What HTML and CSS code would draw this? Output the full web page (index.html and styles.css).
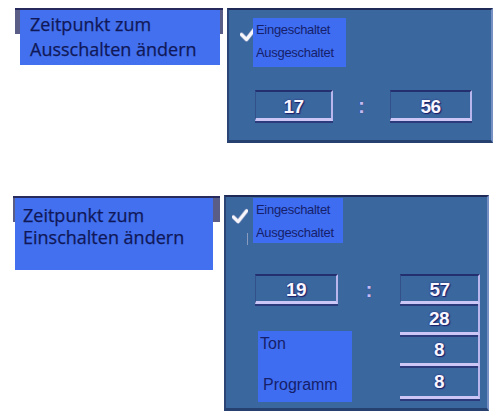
FILE: index.html
```html
<!DOCTYPE html>
<html lang="de">
<head>
<meta charset="utf-8">
<title>Zeitpunkt ändern</title>
<link rel="stylesheet" href="styles.css">
</head>
<body>
<div class="page">
  <section class="row row1">
    <div class="label label1">
      <div class="label-box label-box1">Zeitpunkt zum<br>Ausschalten ändern</div>
    </div>
    <div class="panel panel1">
      <div class="opts opts1">
        <div class="check-col check-col1">
          <svg class="check" viewBox="0 0 17 17" width="17" height="17"><path d="M1.5 9.5 L6.5 14.5 L15.5 3" fill="none" stroke="#9aa6c8" stroke-width="4.4" stroke-linecap="round" stroke-linejoin="round"/><path d="M1.5 9.5 L6.5 14.5 L15.5 3" fill="none" stroke="#f6f6fb" stroke-width="3" stroke-linecap="round" stroke-linejoin="round"/></svg>
        </div>
        <div class="opt-box opt-box1"><div>Eingeschaltet</div><div>Ausgeschaltet</div></div>
      </div>
      <div class="time time1">
        <div class="field tfield f17">17</div>
        <span class="colon colon1">:</span>
        <div class="field tfield f56">56</div>
      </div>
    </div>
  </section>

  <section class="row row2">
    <div class="label label2">
      <div class="label-box label-box2">Zeitpunkt zum<br>Einschalten ändern</div>
    </div>
    <div class="panel panel2">
      <div class="opts opts2">
        <div class="check-col check-col2">
          <svg class="check" viewBox="0 0 17 17" width="16" height="16"><path d="M1.5 9.5 L6.5 14.5 L15.5 3" fill="none" stroke="#9aa6c8" stroke-width="4.4" stroke-linecap="round" stroke-linejoin="round"/><path d="M1.5 9.5 L6.5 14.5 L15.5 3" fill="none" stroke="#f6f6fb" stroke-width="3" stroke-linecap="round" stroke-linejoin="round"/></svg>
          <div class="tick-line"></div>
        </div>
        <div class="opt-box opt-box2"><div>Eingeschaltet</div><div>Ausgeschaltet</div></div>
      </div>
      <div class="time time2">
        <div class="field tfield f19">19</div>
        <span class="colon colon2">:</span>
        <div class="field tfield f57">57</div>
      </div>
      <div class="lower">
        <div class="tp-box">
          <div class="ton">Ton</div>
          <div class="prog">Programm</div>
        </div>
        <div class="stack">
          <div class="field sfield">28</div>
          <div class="field sfield">8</div>
          <div class="field sfield last">8</div>
        </div>
      </div>
    </div>
  </section>
</div>
</body>
</html>
```
FILE: styles.css
```css
html, body {
  margin: 0;
  padding: 0;
  background: #ffffff;
}
body {
  width: 498px;
  height: 420px;
  overflow: hidden;
  font-family: "Liberation Sans", Arial, sans-serif;
}

.row {
  display: flex;
  align-items: flex-start;
}
.row1 {
  padding: 8px 0 0 15px;
}
.row2 {
  margin-top: 52px;
  padding-left: 13px;
}

/* left labels */
.label {
  box-sizing: border-box;
  background: linear-gradient(to bottom, #262a5c 0, #262a5c 2px, #5a5e86 2px, #5a5e86 26px, transparent 26px);
}
.label1 {
  width: 208px;
  margin-right: 4px;
  padding: 2px 0 0 5px;
}
.label2 {
  width: 207px;
  margin-top: 1px;
  margin-right: 4px;
  padding: 2px 0 0 2px;
}
.label-box {
  box-sizing: border-box;
  background: #4270ef;
  color: #101858;
  font-family: "Open Sans", "Noto Sans", sans-serif;
  font-size: 18px;
  -webkit-text-stroke: 0.25px #101858;
  white-space: nowrap;
}
.label-box1 {
  width: 200px;
  height: 55px;
  padding: 2px 0 0 10px;
  line-height: 24.5px;
}
.label-box2 {
  width: 198px;
  height: 72px;
  padding: 6px 0 0 8px;
  line-height: 22px;
}

/* panels */
.panel {
  box-sizing: border-box;
  background: #3b679f;
  border-top: 2px solid #1f2a56;
  border-left: 2px solid #2b4676;
  border-right: 2px solid #7690c4;
  border-bottom: 3px solid #26406f;
}
.panel1 {
  width: 266px;
  height: 135px;
}
.panel2 {
  width: 265px;
  height: 216px;
}

.opts {
  display: flex;
  align-items: flex-start;
}
.opts1 {
  margin-top: 8px;
}
.opts2 {
  margin-top: 1px;
}
.check-col {
  display: flex;
  flex-direction: column;
}
.check-col1 {
  margin: 7px -4px 0 11px;
  width: 17px;
}
.check-col2 {
  margin: 10px 5px 0 6px;
  width: 16px;
}
.check {
  display: block;
}
.tick-line {
  width: 1px;
  height: 12px;
  margin: 9px 0 0 15px;
  background: #8a9bc0;
}

.opt-box {
  box-sizing: border-box;
  background: #3f6df2;
  color: #151f6a;
  font-size: 13px;
  letter-spacing: -0.3px;
  white-space: nowrap;
  padding-left: 3px;
}
.opt-box1 {
  width: 93px;
  height: 49px;
  line-height: 23px;
}
.opt-box2 {
  width: 90px;
  height: 45px;
  line-height: 23px;
}

/* time rows */
.time {
  display: flex;
  align-items: center;
}
.time1 {
  margin: 23px 0 0 26px;
}
.time2 {
  margin: 29px 0 0 29px;
}
.colon {
  text-align: center;
  color: #c3bcf4;
  font-weight: bold;
  font-size: 21px;
  line-height: 1;
  text-shadow: 0 0 1px #2a2a70;
}
.colon1 {
  width: 57px;
}
.colon2 {
  width: 62px;
}

.field {
  box-sizing: border-box;
  display: flex;
  align-items: center;
  justify-content: center;
  color: #f8f6ff;
  font-weight: bold;
  font-size: 19px;
  letter-spacing: -0.5px;
  text-shadow: 0 0 2px #1c1f6a, 1px 1px 1px #1c1f6a;
  border-right: 2px solid #b9b6ee;
  border-bottom: 3px solid #cbc6f6;
  box-shadow: 0 2px 0 #2b3a7a;
}
.tfield {
  height: 31px;
  border-top: 2px solid #232f6e;
  border-left: 1px solid #34508a;
  padding-top: 3px;
}
.f17 { width: 78px; }
.f56 { width: 82px; }
.f19 { width: 83px; height: 30px; }
.f57 { width: 80px; height: 30px; }

/* lower area of panel 2 */
.lower {
  display: flex;
  align-items: flex-start;
  margin-left: 32px;
}
.tp-box {
  box-sizing: border-box;
  width: 94px;
  height: 71px;
  margin-top: 27px;
  background: #3f6df2;
  color: #151f6a;
  font-size: 16px;
  white-space: nowrap;
}
.ton {
  padding: 4px 0 0 2px;
  line-height: 18px;
}
.prog {
  padding: 23px 0 0 5px;
  line-height: 18px;
}
.stack {
  margin-left: 48px;
  display: flex;
  flex-direction: column;
}
.sfield {
  width: 80px;
  height: 31px;
  padding-top: 2px;
}
.sfield.last {
  height: 33px;
}
```
